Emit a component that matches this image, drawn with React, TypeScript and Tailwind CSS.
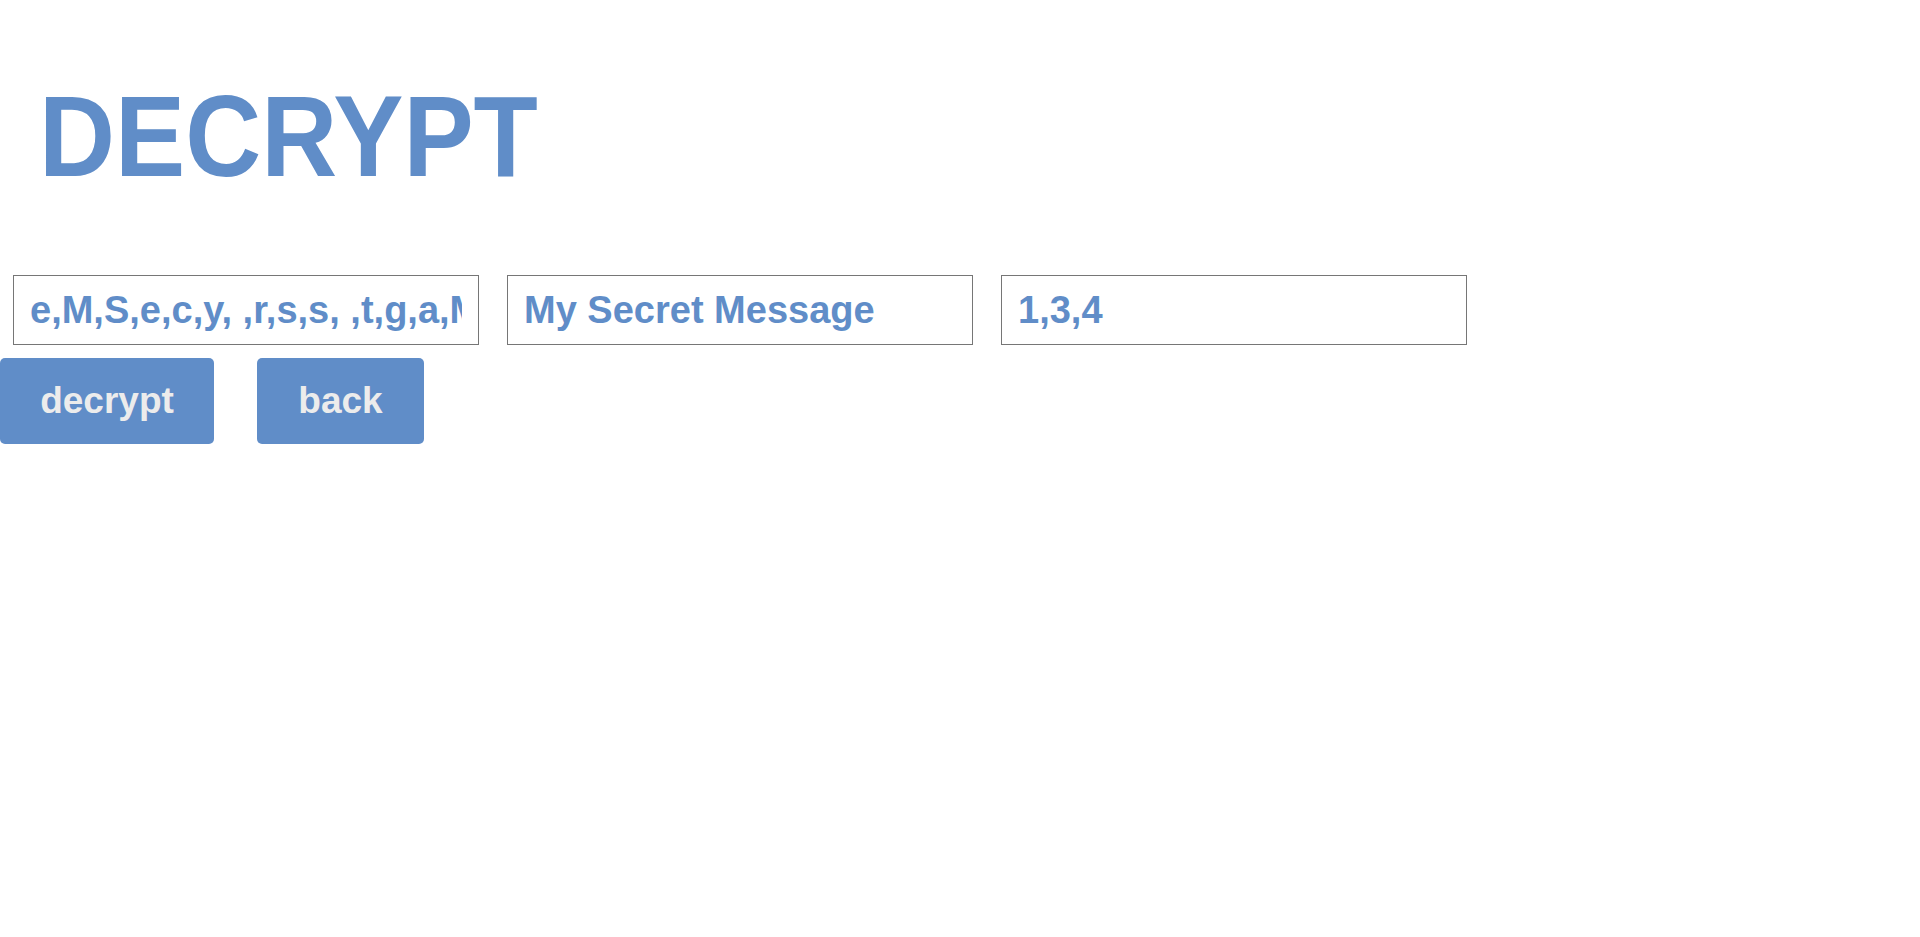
import { useState } from "react";

const font = { fontFamily: '"Liberation Sans", Arial, sans-serif' };

export default function App() {
  const [cipher, setCipher] = useState("e,M,S,e,c,y, ,r,s,s, ,t,g,a,M,e,s,e");
  const [message, setMessage] = useState("My Secret Message");
  const [key, setKey] = useState("1,3,4");

  const fieldClass =
    "w-[466px] h-[70px] border border-[#767676] bg-white px-4 text-[38px] font-bold text-[#608dc8] outline-none";

  return (
    <div className="min-h-screen bg-white" style={font}>
      {/* Title */}
      <h1 className="pt-[79px] pl-[39px] text-[115px] leading-none font-bold text-[#608dc8]">
        <span className="inline-block origin-left scale-x-[0.915]">DECRYPT</span>
      </h1>

      {/* Fields */}
      <div className="mt-[81px] ml-[13px] flex gap-[28px]">
        <input
          className={fieldClass}
          value={cipher}
          onChange={(e) => setCipher(e.target.value)}
        />
        <input
          className={fieldClass}
          value={message}
          onChange={(e) => setMessage(e.target.value)}
        />
        <input
          className={fieldClass}
          value={key}
          onChange={(e) => setKey(e.target.value)}
        />
      </div>

      {/* Actions */}
      <div className="mt-[13px] flex gap-[43px]">
        <button className="w-[214px] h-[86px] rounded-[5px] bg-[#608dc8] text-[37px] font-bold text-[#ececec] flex items-center justify-center cursor-pointer">
          decrypt
        </button>
        <button className="w-[167px] h-[86px] rounded-[5px] bg-[#608dc8] text-[37px] font-bold text-[#ececec] flex items-center justify-center cursor-pointer">
          back
        </button>
      </div>
    </div>
  );
}
